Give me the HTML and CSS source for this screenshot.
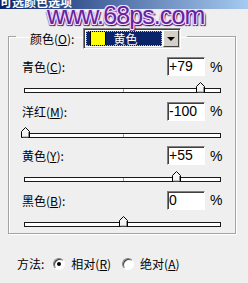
FILE: index.html
```html
<!DOCTYPE html>
<html lang="zh-CN">
<head>
  <meta charset="UTF-8" />
  <title>可选颜色选项</title>
  <link rel="stylesheet" href="styles.css">
</head>
<body>
  <div class="titlebar"><span class="title">可选颜色选项</span></div>
  <div class="watermark">www.68ps.com</div>

  <fieldset class="group">
    <legend class="pick">
      <span class="pick-label">颜色(<u>O</u>):</span>
      <div class="combo">
        <div class="combo-value"><span class="swatch"></span>黄色</div>
        <div class="combo-btn"><span class="arrow"></span></div>
      </div>
    </legend>

    <div class="row">
      <div class="row-top">
        <span class="name">青色(<u>C</u>):</span>
        <span class="field">+79</span>
        <span class="pct">%</span>
      </div>
      <div class="track"><span class="thumb" style="left: 89.5%"></span></div>
    </div>

    <div class="row">
      <div class="row-top">
        <span class="name">洋红(<u>M</u>):</span>
        <span class="field">-100</span>
        <span class="pct">%</span>
      </div>
      <div class="track"><span class="thumb" style="left: 0%"></span></div>
    </div>

    <div class="row">
      <div class="row-top">
        <span class="name">黄色(<u>Y</u>):</span>
        <span class="field">+55</span>
        <span class="pct">%</span>
      </div>
      <div class="track"><span class="thumb" style="left: 77.5%"></span></div>
    </div>

    <div class="row">
      <div class="row-top">
        <span class="name">黑色(<u>B</u>):</span>
        <span class="field">0</span>
        <span class="pct">%</span>
      </div>
      <div class="track"><span class="thumb" style="left: 50%"></span></div>
    </div>
  </fieldset>

  <div class="method">
    <span class="method-label">方法:</span>
    <span class="radio checked"></span>
    <span class="opt">相对(<u>R</u>)</span>
    <span class="radio"></span>
    <span class="opt">绝对(<u>A</u>)</span>
  </div>
</body>
</html>
```

FILE: styles.css
```css
body {
  margin: 0;
  width: 248px;
  height: 283px;
  overflow: hidden;
  position: relative;
  background-color: #efefef;
  font-family: "Noto Sans CJK SC", sans-serif;
  font-size: 12px;
  color: #000;
}
u {
  text-decoration: underline;
}

/* window title, cut off at the top */
.titlebar {
  height: 9px;
  overflow: hidden;
  background: linear-gradient(to right, #0a246a, #a6caf0);
}
.title {
  display: block;
  margin-top: -5px;
  font-weight: bold;
  font-size: 12px;
  line-height: 14px;
  color: #fff;
}

.watermark {
  position: absolute;
  left: 47px;
  top: 1px;
  font-family: "Liberation Sans", sans-serif;
  font-size: 25px;
  letter-spacing: -0.9px;
  color: #66249a;
  text-shadow:
    1px 0 0 #f0dcff, -1px 0 0 #f0dcff, 0 1px 0 #f0dcff, 0 -1px 0 #f0dcff,
    1px 1px 0 #f0dcff, -1px -1px 0 #f0dcff, 1px -1px 0 #f0dcff, -1px 1px 0 #f0dcff,
    2px 2px 1px #3a1060, -1px 2px 1px #5a2a80;
}

/* group box */
.group {
  margin: 15px 0 0 8px;
  width: 228px;
  box-sizing: border-box;
  padding: 8px 13px 6px 13px;
  border: 1px solid #a3a3a3;
  box-shadow: 1px 1px 0 #fff, inset 1px 1px 0 #fff;
}
.pick {
  display: flex;
  align-items: center;
  margin-left: -6px;
  padding: 4px 6px 0 14px;
}
.pick-label {
  margin-right: 9px;
}
.combo {
  display: flex;
  width: 98px;
  height: 21px;
  box-sizing: border-box;
  padding: 1px;
  background: #fff;
  border: 1px solid;
  border-color: #808080 #fff #fff #808080;
  box-shadow: inset 1px 1px 0 #404040, inset -1px -1px 0 #d4d0c8;
}
.combo-value {
  flex: 1;
  display: flex;
  align-items: center;
  margin: 1px;
  background: #0a246a;
  color: #fff;
  outline: 1px dotted #c8c090;
  outline-offset: -1px;
}
.swatch {
  width: 14px;
  height: 13px;
  margin: 0 7px 0 4px;
  background: #ffff00;
  border: 1px solid #000;
}
.combo-btn {
  width: 16px;
  display: flex;
  align-items: center;
  justify-content: center;
  background: #d4d0c8;
  border: 1px solid;
  border-color: #fff #404040 #404040 #fff;
  box-sizing: border-box;
}
.arrow {
  width: 0;
  height: 0;
  border-left: 4px solid transparent;
  border-right: 4px solid transparent;
  border-top: 4px solid #000;
}

/* slider rows */
.row {
  height: 36px;
  margin-bottom: 8.5px;
}
.row:last-child {
  margin-bottom: 0;
}
.row-top {
  display: flex;
  align-items: center;
  height: 19px;
}
.name {
  flex: 1;
}
.field {
  width: 38px;
  height: 19px;
  box-sizing: border-box;
  padding-left: 1px;
  background: #fff;
  border: 1px solid;
  border-color: #808080 #fff #fff #808080;
  box-shadow: inset 1px 1px 0 #404040;
  font-family: "Liberation Sans", sans-serif;
  font-size: 14px;
  line-height: 16px;
}
.pct {
  width: 12px;
  margin-left: 5px;
  font-family: "Liberation Sans", sans-serif;
  font-size: 14px;
}
.track {
  position: relative;
  height: 5px;
  box-sizing: border-box;
  margin: 12px 1px 0 2px;
  background: #fff;
  border: 1px solid #1a1a1a;
}
.track::after {
  content: "";
  position: absolute;
  left: 50%;
  top: 0;
  width: 1px;
  height: 3px;
  background: #a0a0a0;
}
.thumb {
  position: absolute;
  top: -7px;
  width: 9px;
  height: 11px;
  margin-left: -4px;
  z-index: 1;
  background: url("data:image/svg+xml,%3Csvg xmlns='http://www.w3.org/2000/svg' width='9' height='11'%3E%3Cpath d='M0.5 10.5V4.5L4.5 0.5L8.5 4.5V10.5Z' fill='%23f4f4f4' stroke='%23000'/%3E%3Cpath d='M7.5 5v5H1.5' fill='none' stroke='%23909090'/%3E%3C/svg%3E");
}

/* method radios */
.method {
  display: flex;
  align-items: center;
  height: 14px;
  margin-top: 23px;
  padding-left: 17px;
}
.method-label {
  margin-right: 9px;
}
.radio {
  position: relative;
  width: 12px;
  height: 12px;
  box-sizing: border-box;
  border-radius: 50%;
  background: #fff;
  border: 1px solid;
  border-color: #808080 #fff #fff #808080;
  box-shadow: inset 1px 1px 0 #404040;
  margin-right: 6px;
}
.radio.checked::after {
  content: "";
  position: absolute;
  left: 3px;
  top: 3px;
  width: 4px;
  height: 4px;
  border-radius: 50%;
  background: #000;
}
.opt {
  margin-right: 11px;
}
```
